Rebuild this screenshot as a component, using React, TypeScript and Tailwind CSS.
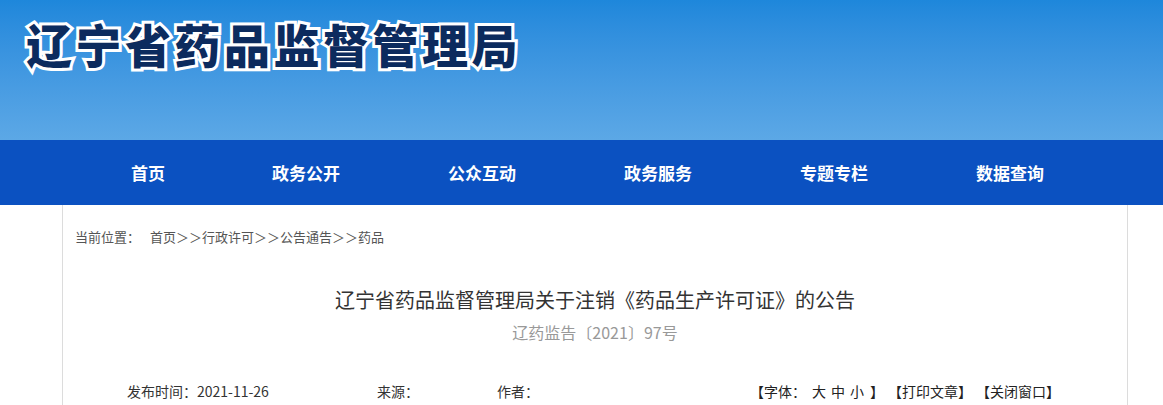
import React from 'react';

const navItems = ['政务公开', '公众互动', '政务服务', '专题专栏', '数据查询'];

const App: React.FC = () => {
  return (
    <div className="min-h-[405px] bg-white font-['Noto_Sans_CJK_SC','Microsoft_YaHei',sans-serif] text-[#333]">
      <header className="h-[140px] bg-gradient-to-b from-[#1e87db] to-[#5ca8e6] pl-[26px] pt-[16px]">
        <h1 className="text-[46px] leading-[54px] font-black tracking-[3.5px] text-[#0c2b5e] [paint-order:stroke_fill] [-webkit-text-stroke:6px_white]">
          辽宁省药品监督管理局
        </h1>
      </header>

      <nav className="flex h-[65px] items-center bg-[#0b51c1] pl-[78px] text-[17px] font-bold text-white">
        <a className="w-[140px] text-center">首页</a>
        {navItems.map((item) => (
          <a key={item} className="w-[176px] text-center">
            {item}
          </a>
        ))}
      </nav>

      <main className="ml-[62px] w-[1066px] min-h-[200px] border-x border-[#dcdcdc]">
        <div className="pl-[12px] pt-[22px] text-[13px] leading-[20px] text-[#555]">
          当前位置：<span className="ml-[10px]">首页＞＞行政许可＞＞公告通告＞＞药品</span>
        </div>

        <h2 className="mt-[39px] text-center text-[20px] leading-[28px] text-[#333]">
          辽宁省药品监督管理局关于注销《药品生产许可证》的公告
        </h2>
        <p className="mt-[6px] text-center text-[16px] leading-[24px] text-[#999]">辽药监告〔2021〕97号</p>

        <div className="mt-[37px] flex pl-[64px] pr-[67px] text-[14px] leading-[20px] text-[#333]">
          <span className="w-[250px]">发布时间：2021-11-26</span>
          <span className="w-[120px]">来源：</span>
          <span className="flex-1">作者：</span>
          <span className="flex gap-[4px] text-[#222]">
            <span>
              【字体：<span className="ml-[6px]">大</span>
              <span className="ml-[5px]">中</span>
              <span className="ml-[5px]">小</span>
              <span className="ml-[6px]">】</span>
            </span>
            <span>【打印文章】</span>
            <span>【关闭窗口】</span>
          </span>
        </div>
      </main>
    </div>
  );
};

export default App;
